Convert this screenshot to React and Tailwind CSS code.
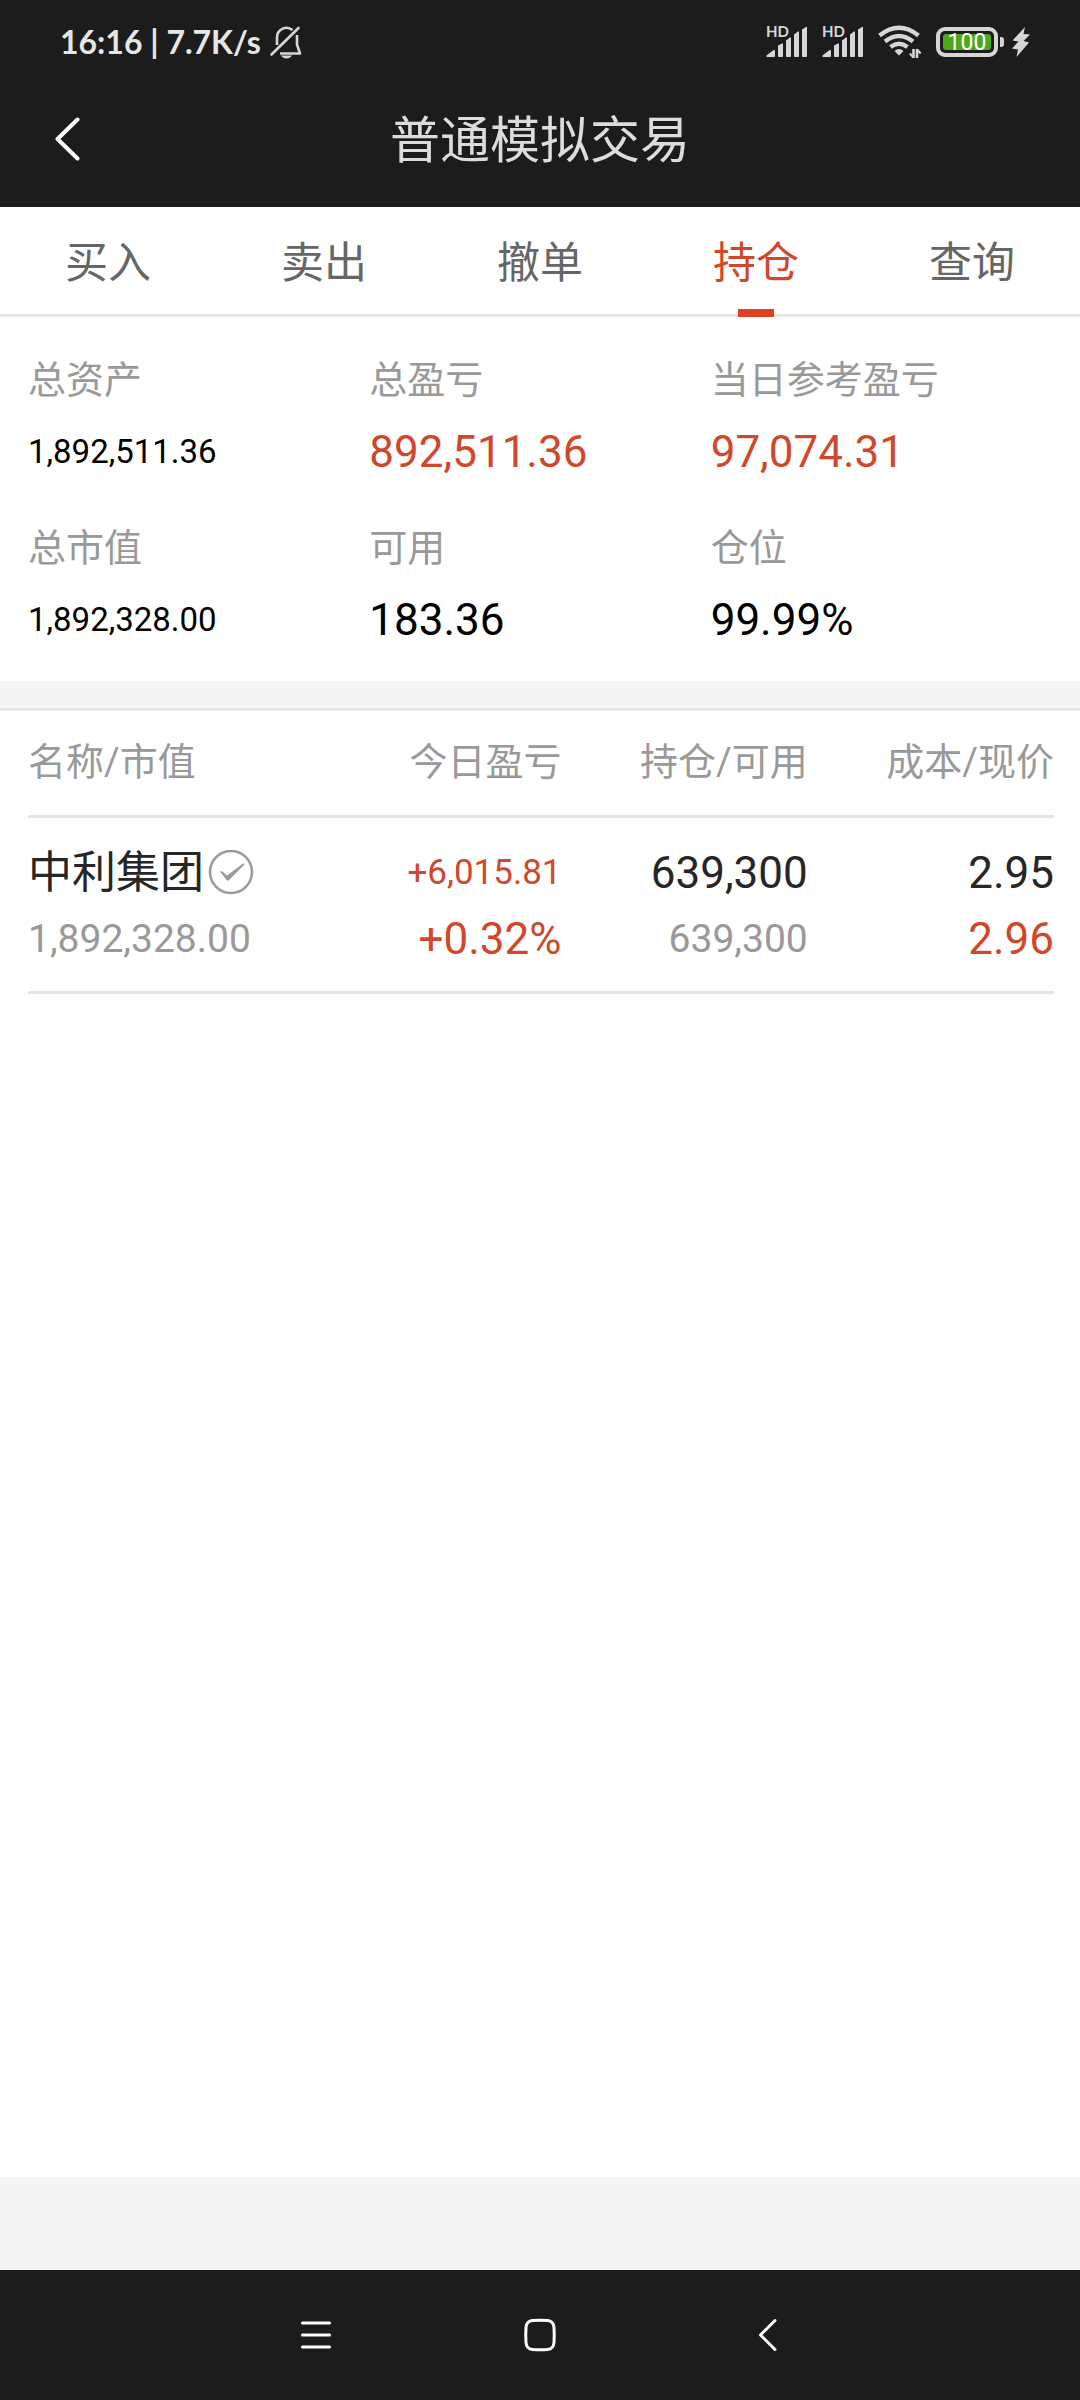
const TABS = ["买入", "卖出", "撤单", "持仓", "查询"];

const SUMMARY = [
  { label: "总资产", value: "1,892,511.36", style: "text-[33px] text-black" },
  { label: "总盈亏", value: "892,511.36", style: "text-[44px] text-[#d0482c]" },
  { label: "当日参考盈亏", value: "97,074.31", style: "text-[44px] text-[#d0482c]" },
  { label: "总市值", value: "1,892,328.00", style: "text-[33px] text-black" },
  { label: "可用", value: "183.36", style: "text-[44px] text-black" },
  { label: "仓位", value: "99.99%", style: "text-[44px] text-black" },
];

function MutedBell() {
  return (
    <svg width="34" height="34" viewBox="0 0 34 34" fill="none" stroke="#d6d6d6" strokeWidth="2.600" aria-hidden="true">
      <path d="M8 20V12.500a9.500 9.500 0 0 1 15.500-7.500" />
      <path d="M28 10v9.500l3 9H11" strokeLinejoin="round" />
      <path d="M2.500 29.500 29.500 3" strokeLinecap="round" />
      <path d="M12 30.500h11q-2 3-5.500 3t-5.500-3z" fill="#d6d6d6" stroke="none" />
    </svg>
  );
}

function Signal() {
  return (
    <svg width="42" height="44" viewBox="0 -6 42 44" fill="#d6d6d6" aria-hidden="true">
      <path d="M1 31q-1.200-1 0-2l6-4.500q2-1 2 .5v5q0 1-1 1z" />
      <path d="M12 19.500l4-2q1-.5 1 .5v12q0 1-1 1h-3q-1 0-1-1z" />
      <path d="M20 14.500l4-3q1-.5 1 .5v18q0 1-1 1h-3q-1 0-1-1z" />
      <path d="M28 8.500l4-3q1-.5 1 .5v24q0 1-1 1h-3q-1 0-1-1z" />
      <path d="M36 3.500l4-2.500q1-.5 1 .5v28.500q0 1-1 1h-3q-1 0-1-1z" />
      <text x="0" y="11" fontFamily="Lato, sans-serif" fontWeight="700" fontSize="15">HD</text>
    </svg>
  );
}

function Wifi() {
  return (
    <svg width="44" height="34" viewBox="0 0 44 34" fill="none" stroke="#d6d6d6" strokeWidth="4.200" aria-hidden="true">
      <path d="M1.500 10.500Q21 -5 40.500 10.500" />
      <path d="M7 16.500Q21 5.500 35 16.500" />
      <path d="M12.500 22Q21 15.500 29.500 22" />
      <path d="M16.500 26q4.500-4 9 0l-4.500 4.500z" fill="#d6d6d6" stroke="none" />
      <g strokeWidth="2.600">
        <path d="M35.500 24v9M39 24v9" />
        <path d="M35.500 32.500 31.800 28.500M39 24.500 42.700 28.500" strokeWidth="2" />
      </g>
    </svg>
  );
}

function Battery() {
  return (
    <div className="flex items-center gap-[2px]">
      <div className="flex h-[30px] w-[62px] rounded-[9px] border-4 border-[#d6d6d6] p-[3px]">
        <div className="flex flex-1 items-center justify-center rounded-[3px] bg-[#4fa81a] text-[23px] leading-none text-white">
          100
        </div>
      </div>
      <div className="h-[10px] w-1 rounded-r-[3px] bg-[#d6d6d6]" />
    </div>
  );
}

function Bolt() {
  return (
    <svg width="18" height="30" viewBox="0 0 18 30" fill="#d6d6d6" aria-hidden="true">
      <path d="M13 0 0.500 13.500 6.500 14.500 0 21.500 6 22.500 4.500 30 17 15.500 11.500 14 18 7.500 11.500 7z" />
    </svg>
  );
}

function StatusBar() {
  return (
    <div className="flex h-[84px] items-center justify-between pr-[50px] pl-[60px]">
      <div className="flex items-center gap-2 font-['Lato'] text-[32px] font-bold text-[#e6e6e6]">
        <span>16:16 | 7.7K/s</span>
        <MutedBell />
      </div>
      <div className="flex items-center gap-[14px]">
        <Signal />
        <Signal />
        <Wifi />
        <div className="flex items-center gap-2">
          <Battery />
          <Bolt />
        </div>
      </div>
    </div>
  );
}

function TitleBar() {
  return (
    <div className="grid h-[123px] grid-cols-[1fr_auto_1fr] items-center pb-[14px]">
      <button type="button" aria-label="返回" className="ml-[43px] flex h-12 w-12 items-center justify-center">
        <svg width="26" height="46" viewBox="0 0 26 46" fill="none" stroke="#fff" strokeWidth="4" strokeLinecap="round" strokeLinejoin="round">
          <path d="M23.500 3.500 3.500 23 23.500 42.500" />
        </svg>
      </button>
      <h1 className="pt-1 text-[50px] leading-none text-[#dcdcdc]">普通模拟交易</h1>
    </div>
  );
}

function Tabs() {
  return (
    <nav className="grid h-[110px] grid-cols-5 border-b-3 border-[#e6e6e9] bg-white">
      {TABS.map((tab) => {
        const active = tab === "持仓";
        return (
          <button
            key={tab}
            type="button"
            aria-current={active ? "page" : undefined}
            className={`relative pt-[5px] text-[43px] ${active ? "text-[#d0482c]" : "text-[#666666]"}`}
          >
            {tab}
            {active && <span className="absolute -bottom-[3px] left-1/2 h-2 w-9 -translate-x-1/2 bg-[#df4125]" />}
          </button>
        );
      })}
    </nav>
  );
}

function Summary() {
  return (
    <dl className="grid grid-cols-3 gap-y-6 bg-white px-7 pt-[27px] pb-[25px]">
      {SUMMARY.map(({ label, value, style }) => (
        <div key={label}>
          <dt className="text-[38px] leading-[72px] text-[#999999]">{label}</dt>
          <dd className={`leading-[72px] ${style}`}>{value}</dd>
        </div>
      ))}
    </dl>
  );
}

function CheckBadge() {
  return (
    <svg width="46" height="46" viewBox="0 0 46 46" fill="none" stroke="#9a9a9a" aria-hidden="true">
      <circle cx="23" cy="22" r="21" strokeWidth="2.500" />
      <path d="M12 21.500q2-.8 3 .5l4 3.500L35 13.500q1.500-.5 1.500 1L21 30q-1.200 1.500-2.500 0z" fill="#9a9a9a" stroke="none" />
    </svg>
  );
}

function Holdings() {
  return (
    <section className="flex-1 border-t-3 border-[#e6e6ea] bg-white pr-[26px] pl-7">
      <table className="w-full table-fixed border-collapse text-right">
        <thead>
          <tr className="h-[105px] border-b-3 border-[#e6e6ea] text-[38px] text-[#999999]">
            <th scope="col" className="w-[28%] text-left font-normal">名称/市值</th>
            <th scope="col" className="w-[24%] font-normal">今日盈亏</th>
            <th scope="col" className="w-[24%] font-normal">持仓/可用</th>
            <th scope="col" className="w-[24%] font-normal">成本/现价</th>
          </tr>
        </thead>
        <tbody>
          <tr className="border-b-3 border-[#e6e6ea] text-[44px] leading-[66px] text-[#262626]">
            <td className="pt-[22px] pb-[19px] text-left">
              <div className="flex items-center gap-1 whitespace-nowrap">
                中利集团
                <CheckBadge />
              </div>
              <div className="text-[39px] text-[#999999]">1,892,328.00</div>
            </td>
            <td className="pt-[22px] pb-[19px] text-[#d0482c]">
              <div className="text-[35px]">+6,015.81</div>
              <div>+0.32%</div>
            </td>
            <td className="pt-[22px] pb-[19px]">
              <div>639,300</div>
              <div className="text-[39px] text-[#999999]">639,300</div>
            </td>
            <td className="pt-[22px] pb-[19px]">
              <div>2.95</div>
              <div className="text-[#d0482c]">2.96</div>
            </td>
          </tr>
        </tbody>
      </table>
    </section>
  );
}

function SystemNav() {
  return (
    <nav className="flex h-[130px] items-center justify-center gap-44 bg-[#1c1c1c]">
      <button type="button" aria-label="最近任务" className="flex h-12 w-12 items-center justify-center">
        <svg width="32" height="32" viewBox="0 0 32 32" stroke="#fff" strokeWidth="3" strokeLinecap="round">
          <path d="M2.500 4h27M2.500 16h27M2.500 28h27" />
        </svg>
      </button>
      <button type="button" aria-label="主屏幕" className="flex h-12 w-12 items-center justify-center">
        <svg width="34" height="34" viewBox="0 0 34 34" fill="none" stroke="#fff" strokeWidth="3">
          <path d="M9.500 2.500Q17 2 24.500 2.500 30.500 3 31 9.500 31.500 17 31 24.500 30.500 31 24.500 31.500 17 32 9.500 31.500 3.500 31 3 24.500 2.500 17 3 9.500 3.500 3 9.500 2.500z" />
        </svg>
      </button>
      <button type="button" aria-label="后退" className="flex h-12 w-12 items-center justify-end pr-[10px]">
        <svg width="20" height="34" viewBox="0 0 20 34" fill="none" stroke="#fff" strokeWidth="3" strokeLinecap="round" strokeLinejoin="round">
          <path d="M17 2.500 2.500 17 17 31.500" />
        </svg>
      </button>
    </nav>
  );
}

export default function App() {
  return (
    <div className="flex min-h-screen flex-col bg-[#f4f4f4] font-['Roboto','Noto_Sans_CJK_SC',sans-serif]" lang="zh-CN">
      <header className="bg-[#1c1c1c]">
        <StatusBar />
        <TitleBar />
      </header>
      <Tabs />
      <main className="flex flex-1 flex-col gap-[27px] pb-[93px]">
        <Summary />
        <Holdings />
      </main>
      <SystemNav />
    </div>
  );
}
